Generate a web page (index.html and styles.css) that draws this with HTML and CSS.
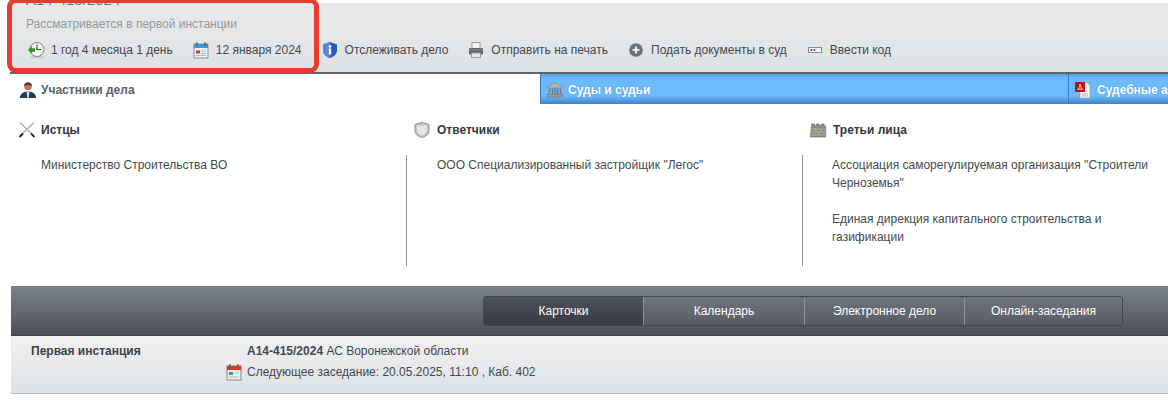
FILE: index.html
```html
<!DOCTYPE html>
<html lang="ru">
<head>
<meta charset="utf-8">
<title>Карточка дела</title>
<link rel="stylesheet" href="styles.css">
</head>
<body>
<div class="page">
  <header class="head">
    <div class="case-no">А14-415/2024</div>
    <div class="status">Рассматривается в первой инстанции</div>
    <nav class="actions">
      <span class="act">
        <svg class="ic" viewBox="0 0 18 18"><ellipse cx="10" cy="16" rx="7" ry="1.500" fill="#c9ccc8"/><circle cx="10" cy="8.500" r="7" fill="#f4f5f0" stroke="#7f837c"/><path d="M10 3.500v5h4.500" fill="none" stroke="#3e423e" stroke-width="1.100"/><path d="M1 9l3.800-4v2.300h3.200v3.400H4.800V13z" fill="#2f9a2a"/></svg>
        1 год 4 месяца 1 день</span>
      <span class="act">
        <svg class="ic" viewBox="0 0 18 18"><rect x="2" y="3" width="14" height="14" fill="#eef1f4" stroke="#8d8f92"/><rect x="2" y="3" width="14" height="4" fill="#3d95e0"/><path d="M5 1.500v3M13 1.500v3" stroke="#555" stroke-width="1.500"/><rect x="4" y="9.500" width="4" height="3" fill="#d9342c"/><path d="M9 10h5M4 14.500h10M9 12.500h5" stroke="#a9b8c6"/></svg>
        12 января 2024</span>
      <span class="act">
        <svg class="ic" viewBox="0 0 18 18"><path d="M9 1l7 2.500V9c0 4-3 6.600-7 8-4-1.400-7-4-7-8V3.500z" fill="#2d55c4"/><path d="M9 1v16c-4-1.400-7-4-7-8V3.500z" fill="#5b82dc"/><rect x="7.800" y="7.500" width="2.400" height="6" fill="#fff"/><circle cx="9" cy="5.500" r="1.400" fill="#fff"/></svg>
        Отслеживать дело</span>
      <span class="act">
        <svg class="ic" viewBox="0 0 18 18"><rect x="5" y="1.500" width="8" height="6" fill="#f4f5f5" stroke="#9ba0a5"/><rect x="2" y="7" width="14" height="6.500" rx="1" fill="#5e6468"/><rect x="3" y="8" width="12" height="1.500" fill="#83898d"/><rect x="4.500" y="12" width="9" height="4.500" fill="#e8eaeb" stroke="#9ba0a5"/></svg>
        Отправить на печать</span>
      <span class="act">
        <svg class="ic" viewBox="0 0 18 18"><circle cx="9" cy="9" r="6.800" fill="#6c7074"/><path d="M9 5.500v7M5.500 9h7" stroke="#eceded" stroke-width="2.200"/></svg>
        Подать документы в суд</span>
      <span class="act">
        <svg class="ic" viewBox="0 0 18 18"><rect x="2.500" y="6.500" width="13" height="5" fill="#f6f6f6" stroke="#8c9095"/><circle cx="5.500" cy="9" r="1" fill="#444"/><circle cx="8.500" cy="9" r="1" fill="#444"/></svg>
        Ввести код</span>
    </nav>
  </header>

  <div class="tabs">
    <div class="tab tab-on">
      <svg class="ic" viewBox="0 0 18 18"><circle cx="9" cy="5.500" r="3.800" fill="#b5795a"/><path d="M5 5c0-5 8-5 8 0-2-1.500-6-1.500-8 0z" fill="#5a3a28"/><path d="M1 17c0-4 3-6.500 8-6.500s8 2.500 8 6.500z" fill="#23395a"/><path d="M7.500 10.500h3l-.8 6.500H8.300z" fill="#d5e0e8"/></svg>
      Участники дела</div>
    <div class="tab tab-blue">
      <svg class="ic" viewBox="0 0 18 18"><path d="M9 1.500l7.500 4v1.500h-15V5.500z" fill="#b5b5b2" stroke="#77797a" stroke-width=".6"/><path d="M3.500 7.500v6M6.500 7.500v6M9 7.500v6M11.500 7.500v6M14.500 7.500v6" stroke="#77797a" stroke-width="1.400"/><rect x="1.500" y="13.500" width="15" height="2.500" fill="#9b9c9b" stroke="#6e7071" stroke-width=".6"/></svg>
      Суды и судьи</div>
    <div class="tab tab-blue tab-last">
      <svg class="ic" viewBox="0 0 18 18"><path d="M6 1.500h7l3 3v12.500H6z" fill="#f2f4f2" stroke="#9fa6a0" stroke-width=".7"/><path d="M8 13h6M8 15h6" stroke="#b5bbb6"/><rect x="1" y="1" width="10" height="10" rx="1" fill="#c50f0f"/><path d="M3.500 8.500C5 7.500 6 5 6 3c.3 2 1 4 2.500 5.500-2-.5-3.500-.5-5 0z" fill="none" stroke="#fff" stroke-width=".8"/></svg>
      Судебные акты</div>
  </div>

  <section class="parties">
    <div class="col">
      <h3 class="col-title">
        <svg class="ic" viewBox="0 0 18 18"><path d="M2 1.500l12 11.500M16 1.500L4 13" stroke="#b0b2b3" stroke-width="1.500"/><path d="M13 12.500l3.500 3.500M5 12.500L1.500 16" stroke="#222" stroke-width="1.800"/></svg>
        Истцы</h3>
      <div class="col-body"><p>Министерство Строительства ВО</p></div>
    </div>
    <div class="col">
      <h3 class="col-title col-title-mid">
        <svg class="ic" viewBox="0 0 18 18"><path d="M9 1.500l7 2v6c0 3.500-3 6-7 7-4-1-7-3.500-7-7v-6z" fill="#c3c5c5" stroke="#8d9090"/><path d="M4 4.500h10v4.500c0 2.500-2 4.500-5 5.500-3-1-5-3-5-5.500z" fill="#e5e6e6"/></svg>
        Ответчики</h3>
      <div class="col-body col-rule"><p>ООО Специализированный застройщик "Легос"</p></div>
    </div>
    <div class="col">
      <h3 class="col-title">
        <svg class="ic" viewBox="0 0 18 18"><path d="M1.500 3h3v2h1.800V3h3v2h1.800V3h3v2h1.600v11h-15.200z" fill="#8a8d84" stroke="#65675f" stroke-width=".6"/><path d="M1.500 8h15M1.500 11h15M1.500 14h15M6 8v3M11 8v3M8.500 11v3" stroke="#b8c0ad" stroke-width=".8"/></svg>
        Третьи лица</h3>
      <div class="col-body col-rule col-last">
        <p>Ассоциация саморегулируемая организация "Строители Черноземья"</p>
        <p>Единая дирекция капитального строительства и газификации</p>
      </div>
    </div>
  </section>

  <div class="darkbar">
    <div class="switch">
      <span class="sw sw-on">Карточки</span>
      <span class="sw">Календарь</span>
      <span class="sw">Электронное дело</span>
      <span class="sw">Онлайн-заседания</span>
    </div>
  </div>

  <div class="inst">
    <div class="inst-name">Первая инстанция</div>
    <div class="inst-info">
      <div class="inst-line"><b>А14-415/2024</b> АС Воронежской области</div>
      <div class="inst-line inst-next">
        <svg class="ic-s" viewBox="0 0 16 18"><rect x="1" y="3" width="14" height="14" fill="#f2f2ec" stroke="#85867f"/><rect x="1" y="3" width="14" height="4" fill="#d9382e"/><path d="M4 1v3M12 1v3" stroke="#555" stroke-width="1.300"/><rect x="3" y="9" width="4" height="3" fill="#3d86cf"/><path d="M8 10h5M3 14h10" stroke="#a9b8a8"/></svg>
        Следующее заседание: 20.05.2025, 11:10 , Каб. 402</div>
    </div>
  </div>

  <div class="marker"></div>
</div>
</body>
</html>
```
FILE: styles.css
```css
* { box-sizing: border-box; }
html, body { margin: 0; height: 402px; overflow: hidden; background: #fff; }
body { font: 12px/18px "Liberation Sans", Arial, sans-serif; color: #4a4f55; }
.page { position: relative; width: 1168px; height: 402px; padding: 3px 0 0 11px; overflow: hidden; }

.head {
  height: 71px; padding-left: 16px; overflow: hidden;
  background: linear-gradient(#e8e9ea, #dfe2e5);
  border-bottom: 2px solid #5f656d;
  margin-left: -1px;
}
.case-no { font-size: 15px; line-height: 20px; height: 6px; margin-top: -13px; color: #70757b; white-space: nowrap; }
.status { margin-top: 19px; color: #94989c; height: 18px; }
.actions { display: flex; align-items: center; height: 18px; margin-top: 8px; margin-left: 1px; color: #43484e; }
.act { display: flex; align-items: center; gap: 6px; white-space: nowrap; margin-right: 19px; }
.ic { width: 18px; height: 18px; flex: none; }

.tabs { display: flex; height: 30px; width: 1300px; }
.tab { display: flex; align-items: center; gap: 4px; font-weight: bold; white-space: nowrap; padding-top: 1px; }
.tab-on { width: 529px; padding-left: 8px; background: #fff; color: #5b6068; padding-top: 2px; }
.tab-blue {
  width: 528px; padding-left: 5px; color: #fff;
  background: linear-gradient(#4f9fe6 0, #6db9fd 4px, #6db9fd 22px, #3f83c4 30px);
  border-left: 1px solid #3c7fbe;
  text-shadow: 0 0 1px #3f83c4;
}
.tab-last { width: 240px; padding-left: 5px; gap: 5px; }

.parties { display: grid; grid-template-columns: repeat(3, 396px); height: 182px; padding-top: 16px; }
.col-title { display: flex; align-items: center; gap: 5px; margin: 0 0 0 7px; height: 20px; font-size: 12px; font-weight: bold; color: #33383e; }
.col-title-mid { margin-left: 6px; gap: 6px; }
.col-body { margin-top: 15px; padding: 1px 40px 0 30px; height: 111px; color: #454a50; }
.col-last { padding-left: 29px; }
.col-rule { position: relative; }
.col-rule::before { content: ""; position: absolute; left: -1px; top: 0; bottom: 0; width: 1px; background: #8f9296; }
.col-body p { margin: 0 0 18px; }

.darkbar {
  height: 50px; display: flex; justify-content: flex-end; align-items: center;
  padding-right: 45px;
  background: linear-gradient(#7b818a, #4c5059);
  border-bottom: 1px solid #3e424a;
}
.switch { display: grid; grid-template-columns: 159px 161px 160px 1fr; width: 640px; height: 30px; border: 1px solid #41454d; border-radius: 3px; overflow: hidden; }
.sw {
  display: flex; align-items: center; justify-content: center;
  color: #fff; border-left: 1px solid #8c9199;
  background: linear-gradient(#6f747d, #575b64);
}
.sw:first-child { border-left: 0; }
.sw-on { background: linear-gradient(#4e525b, #383b43); }

.inst {
  height: 58px; display: flex; padding: 6px 0 0 20px;
  background: linear-gradient(#f0f1f2, #dfe2e5);
  border-bottom: 1px solid #b9bcbf;
}
.inst-name { width: 216px; font-weight: bold; color: #3d4147; }
.inst-line { height: 18px; color: #43484e; margin-bottom: 3px; white-space: nowrap; }
.inst-next { display: flex; align-items: center; gap: 5px; margin-left: -21px; }
.ic-s { width: 16px; height: 18px; flex: none; }

.marker {
  position: absolute; left: 7px; top: -2px; width: 312px; height: 75px;
  border: 5px solid #ea3b2f; border-radius: 9px;
}
```
